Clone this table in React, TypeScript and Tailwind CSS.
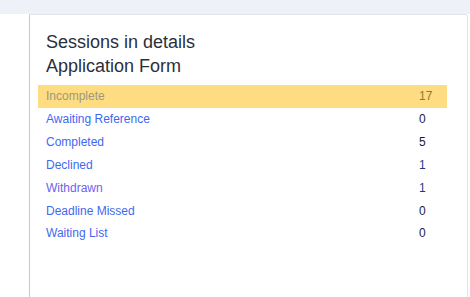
const rows = [
  { label: "Incomplete", count: 17, active: true },
  { label: "Awaiting Reference", count: 0 },
  { label: "Completed", count: 5 },
  { label: "Declined", count: 1 },
  { label: "Withdrawn", count: 1, visited: true },
  { label: "Deadline Missed", count: 0 },
  { label: "Waiting List", count: 0 },
]

const App = () => {
  return (
    <div className="w-[470px] h-[297px] overflow-hidden bg-white font-['Liberation_Sans',Arial,sans-serif]">
      <div className="h-[14px] bg-[#eef1f8]" />
      <div className="flex h-[283px]">
        <div className="w-[29px] shrink-0 bg-white" />
        <div className="flex-1 mr-[2px] border-l border-l-[#c9c9c9] border-t border-t-[#dfe3ea] border-r border-r-[#e3e3e3] rounded-tr-[3px] pt-[15px] pl-[8px] pr-[20px]">
          <div className="pl-[8px] text-[18px] leading-[24px] text-[#2b2f3a]">
            <div>Sessions in details</div>
            <div>Application Form</div>
          </div>
          <div className="mt-[7px]">
            {rows.map((r) => (
              <div
                key={r.label}
                className={
                  "flex items-center h-[22.83px] text-[12px] pl-[8px] " +
                  (r.active ? "bg-[#fedd82]" : "")
                }
              >
                <span
                  className={
                    "flex-1 " +
                    (r.active
                      ? "text-[#9d977c]"
                      : r.visited
                      ? "text-[#6b62f0]"
                      : "text-[#3f68f2]")
                  }
                >
                  {r.label}
                </span>
                <span
                  className={
                    "w-[28px] " +
                    (r.active ? "text-[#8c7a3c]" : r.count === 1 ? "text-[#1e3a8a]" : "text-[#1a1a40]")
                  }
                >
                  {r.count}
                </span>
              </div>
            ))}
          </div>
        </div>
      </div>
    </div>
  )
}

export default App
